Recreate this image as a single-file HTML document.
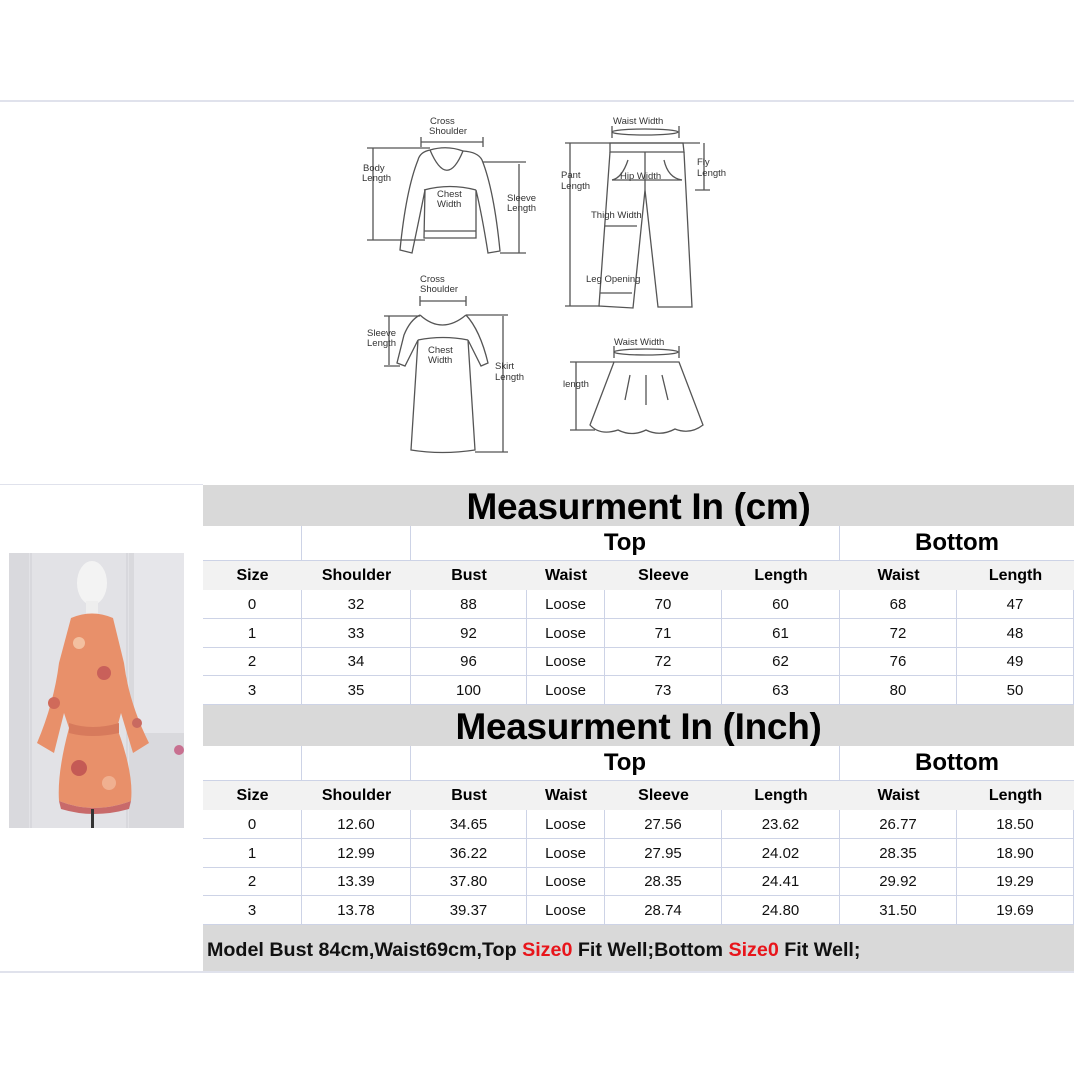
<!DOCTYPE html>
<html><head><meta charset="utf-8"><style>
*{margin:0;padding:0;box-sizing:border-box}
body{width:1074px;height:1074px;background:#fff;position:relative;overflow:hidden;font-family:"Liberation Sans",Arial,sans-serif}
.a{position:absolute}
.t{position:absolute;left:203px;width:871px;background:#d9d9d9;text-align:center;font-weight:bold;font-size:37px;color:#000;letter-spacing:-0.3px}
.r{position:absolute;left:203px;width:871px;display:flex}
.r div{text-align:center;border-right:1px solid #cdd3e6;border-bottom:1px solid #cdd3e6;display:flex;align-items:center;justify-content:center}
.h{background:#f2f2f2}
.h div{font-weight:bold;font-size:16px;border-right:none;border-bottom:none}
.d div{font-size:15px;color:#111}
.c1{width:99px}.c2{width:109px}.c3{width:116px}.c4{width:78px}.c5{width:117px}.c6{width:118px}.c7{width:117px}.c8{width:117px}
.top div{font-weight:bold;font-size:24px;background:#fff}
</style></head><body>
<div class="a" style="left:0;top:100px;width:1074px;height:2px;background:#e0e2ec"></div>
<div class="a" style="left:0;top:971px;width:1074px;height:2px;background:#e0e2ec"></div>
<div class="a" style="left:0;top:484px;width:203px;height:1px;background:#e0e2ec"></div>

<svg class="a" style="left:0;top:0" width="1074" height="480" fill="none" stroke="#444" stroke-width="1.3" font-family="Liberation Sans" font-size="9.5">
<g stroke="#555">
<path d="M430 150 Q447 190 463 151"/>
<path d="M430 150 Q447 145 463 151"/>
<path d="M430 150 Q420 152 418 160 Q406 190 400 250 L412 253 Q420 215 425 190 L424 238 L476 238 L476 190 Q482 215 488 253 L500 251 Q494 190 482 160 Q478 152 463 151"/>
<path d="M424 231 L476 231"/>
<path d="M424 190 Q450 183 476 190"/>
<path d="M421 142 L483 142 M421 137 V147 M483 137 V147"/>
<path d="M373 148 V240 M367 148 H430 M367 240 H425"/>
<path d="M519 164 V253 M483 162 H526 M500 253 H526"/>
<ellipse cx="645" cy="132" rx="33" ry="3"/>
<path d="M612 126 V138 M679 126 V138"/>
<path d="M610 143 L683 143 L684 152 L610 152 Z"/>
<path d="M610 152 L599 306 L633 308 L645 190 L658 307 L692 307 L684 152"/>
<path d="M612 180 Q622 178 628 160 M682 180 Q668 178 664 160 M645 152 V190"/>
<path d="M612 180 L682 180"/>
<path d="M570 143 V306 M565 143 H700 M565 306 H600"/>
<path d="M704 143 V190 M695 190 H710"/>
<path d="M605 226 L637 226 M600 293 L632 293"/>
<path d="M420 315 Q442 335 466 315"/>
<path d="M420 315 Q410 320 404 335 L397 363 L405 366 L418 340 L411 450 Q442 455 475 450 L468 340 L481 366 L488 363 Q480 330 466 315"/>
<path d="M418 340 Q443 335 468 340"/>
<path d="M420 301 H466 M420 296 V306 M466 296 V306"/>
<path d="M389 316 V365 M384 316 H420 M384 366 H400"/>
<path d="M503 316 V452 M466 315 H508 M475 452 H508"/>
<ellipse cx="646" cy="352" rx="32" ry="3"/>
<path d="M614 346 V358 M679 346 V358"/>
<path d="M614 362 H679 L703 425 Q690 435 675 429 Q660 437 646 430 Q632 437 618 430 Q600 436 590 425 Z"/>
<path d="M630 375 L625 400 M646 375 L646 405 M662 375 L668 400"/>
<path d="M576 362 V430 M570 362 H614 M570 430 H595"/>
</g>
<g fill="#333" stroke="none">
<text x="430" y="124">Cross</text><text x="429" y="134">Shoulder</text>
<text x="363" y="171">Body</text><text x="362" y="181">Length</text>
<text x="437" y="197">Chest</text><text x="437" y="207">Width</text>
<text x="507" y="201">Sleeve</text><text x="507" y="211">Length</text>
<text x="613" y="124">Waist Width</text>
<text x="561" y="178">Pant</text><text x="561" y="189">Length</text>
<text x="620" y="179">Hip Width</text>
<text x="697" y="165">Fly</text><text x="697" y="176">Length</text>
<text x="591" y="218">Thigh Width</text>
<text x="586" y="282">Leg Opening</text>
<text x="420" y="282">Cross</text><text x="420" y="292">Shoulder</text>
<text x="367" y="336">Sleeve</text><text x="367" y="346">Length</text>
<text x="428" y="353">Chest</text><text x="428" y="363">Width</text>
<text x="495" y="369">Skirt</text><text x="495" y="380">Length</text>
<text x="614" y="345">Waist Width</text>
<text x="563" y="387">length</text>
</g>
</svg>

<svg class="a" style="left:9px;top:553px" width="175" height="275">
<rect width="175" height="275" fill="#d9d9dd"/>
<rect x="20" y="0" width="100" height="275" fill="#e2e2e6"/>
<rect x="125" y="0" width="50" height="180" fill="#e6e6ea"/>
<line x1="22" y1="0" x2="22" y2="275" stroke="#cfcfd4"/>
<line x1="118" y1="0" x2="118" y2="275" stroke="#cfcfd4"/>
<ellipse cx="83" cy="30" rx="15" ry="22" fill="#f3f3f3"/>
<rect x="77" y="48" width="12" height="14" fill="#eee"/>
<path d="M62 65 Q83 56 104 65 L115 110 Q120 150 140 190 L124 200 L112 160 L108 175 Q125 220 122 248 Q85 262 50 248 Q48 220 60 175 L55 160 L45 200 L28 190 Q45 150 50 110 Z" fill="#e8906a"/>
<path d="M60 170 Q83 178 110 170 L110 180 Q83 186 60 180Z" fill="#d77a5c"/>
<circle cx="70" cy="90" r="6" fill="#f3c0a0"/><circle cx="95" cy="120" r="7" fill="#c9605a"/>
<circle cx="70" cy="215" r="8" fill="#c45a55"/><circle cx="100" cy="230" r="7" fill="#f0b090"/>
<circle cx="45" cy="150" r="6" fill="#d06a5a"/><circle cx="128" cy="170" r="5" fill="#c96a60"/>
<path d="M50 248 Q85 262 122 248 L120 256 Q85 266 52 256Z" fill="#c86a6a"/>
<rect x="82" y="256" width="3" height="19" fill="#333"/>
<circle cx="170" cy="197" r="5" fill="#c87090"/>
</svg>

<div class="t" style="top:485px;height:41px;line-height:44px">Measurment In (cm)</div>
<div class="r top" style="top:526px;height:35px"><div class="c1"></div><div class="c2"></div><div style="width:429px">Top</div><div style="width:234px;border-right:none">Bottom</div></div>
<div class="r h" style="top:561px;height:29px"><div class="c1">Size</div><div class="c2">Shoulder</div><div class="c3">Bust</div><div class="c4">Waist</div><div class="c5">Sleeve</div><div class="c6">Length</div><div class="c7">Waist</div><div class="c8">Length</div></div>
<div class="r d" style="top:590px;height:29px"><div class="c1">0</div><div class="c2">32</div><div class="c3">88</div><div class="c4">Loose</div><div class="c5">70</div><div class="c6">60</div><div class="c7">68</div><div class="c8">47</div></div>
<div class="r d" style="top:619px;height:29px"><div class="c1">1</div><div class="c2">33</div><div class="c3">92</div><div class="c4">Loose</div><div class="c5">71</div><div class="c6">61</div><div class="c7">72</div><div class="c8">48</div></div>
<div class="r d" style="top:648px;height:28px"><div class="c1">2</div><div class="c2">34</div><div class="c3">96</div><div class="c4">Loose</div><div class="c5">72</div><div class="c6">62</div><div class="c7">76</div><div class="c8">49</div></div>
<div class="r d" style="top:676px;height:29px"><div class="c1">3</div><div class="c2">35</div><div class="c3">100</div><div class="c4">Loose</div><div class="c5">73</div><div class="c6">63</div><div class="c7">80</div><div class="c8">50</div></div>

<div class="t" style="top:705px;height:41px;line-height:44px">Measurment In (Inch)</div>
<div class="r top" style="top:746px;height:35px"><div class="c1"></div><div class="c2"></div><div style="width:429px">Top</div><div style="width:234px;border-right:none">Bottom</div></div>
<div class="r h" style="top:781px;height:29px"><div class="c1">Size</div><div class="c2">Shoulder</div><div class="c3">Bust</div><div class="c4">Waist</div><div class="c5">Sleeve</div><div class="c6">Length</div><div class="c7">Waist</div><div class="c8">Length</div></div>
<div class="r d" style="top:810px;height:29px"><div class="c1">0</div><div class="c2">12.60</div><div class="c3">34.65</div><div class="c4">Loose</div><div class="c5">27.56</div><div class="c6">23.62</div><div class="c7">26.77</div><div class="c8">18.50</div></div>
<div class="r d" style="top:839px;height:29px"><div class="c1">1</div><div class="c2">12.99</div><div class="c3">36.22</div><div class="c4">Loose</div><div class="c5">27.95</div><div class="c6">24.02</div><div class="c7">28.35</div><div class="c8">18.90</div></div>
<div class="r d" style="top:868px;height:28px"><div class="c1">2</div><div class="c2">13.39</div><div class="c3">37.80</div><div class="c4">Loose</div><div class="c5">28.35</div><div class="c6">24.41</div><div class="c7">29.92</div><div class="c8">19.29</div></div>
<div class="r d" style="top:896px;height:29px"><div class="c1">3</div><div class="c2">13.78</div><div class="c3">39.37</div><div class="c4">Loose</div><div class="c5">28.74</div><div class="c6">24.80</div><div class="c7">31.50</div><div class="c8">19.69</div></div>

<div class="a" style="left:203px;top:925px;width:871px;height:46px;background:#d9d9d9;font-weight:bold;font-size:19.7px;line-height:50px;padding-left:4px;color:#111;white-space:nowrap">Model Bust 84cm,Waist69cm,Top <span style="color:#e8151b">Size0</span> Fit Well;Bottom <span style="color:#e8151b">Size0</span> Fit Well;</div>
</body></html>
